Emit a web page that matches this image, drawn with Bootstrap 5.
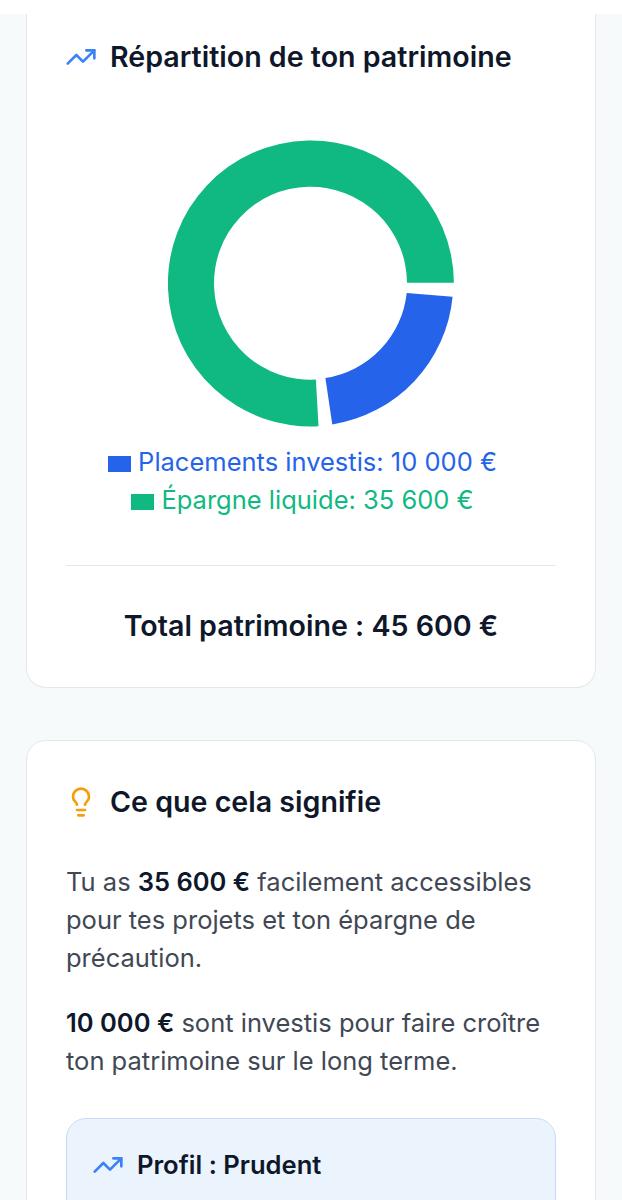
<!DOCTYPE html>
<html lang="fr">
<head>
  <meta charset="UTF-8" />
  <title>Patrimoine</title>
  <link href="https://cdn.jsdelivr.net/npm/bootstrap@5.3.0/dist/css/bootstrap.min.css" rel="stylesheet" />
  <style>
    html, body { height: 1200px; overflow: hidden; }
    body { background: #f6fafb; font-family: Inter, "Liberation Sans", sans-serif; color: #0f172a; font-feature-settings: "calt" 0; }
    .top-strip { height: 14px; background: #fff; }
    .page-wrap { padding: 0 26px; }
    .panel { background: #fff; border: 1px solid #e3e8ec; border-radius: 20px; padding: 0 39px; }
    .panel-first { border-top: 0; border-top-left-radius: 0; border-top-right-radius: 0; padding-top: 24px; padding-bottom: 41px; margin-bottom: 52px; }
    .panel-second { padding-top: 42px; padding-bottom: 40px; }
    .panel-title { font-size: 28.6px; font-weight: 600; line-height: 38px; margin: 0; }
    .title-icon { width: 32px; height: 32px; flex: none; margin-left: -1px; }
    .title-row { gap: 13px; }
    .donut { width: 286px; height: 287px; display: block; margin: 64px auto 16px; }
    .legend-line { font-size: 25.5px; line-height: 38px; text-align: center; padding-right: 17px; }
    .legend-blue { color: #2563eb; }
    .legend-green { color: #10b981; }
    .legend-dot { display: inline-block; width: 23px; height: 16px; margin-right: 7px; vertical-align: -1px; }
    .legend-blue .legend-dot { background: #2563eb; }
    .legend-green .legend-dot { background: #10b981; }
    .total-line { border-top: 1px solid #e2e8f0; margin-top: 46px; padding-top: 40px; font-size: 28.6px; font-weight: 600; line-height: 40px; text-align: center; }
    .copy { font-size: 25.5px; line-height: 38px; color: #3f4854; margin: 0 0 27px; }
    .copy strong { color: #0f172a; font-weight: 600; }
    .copy-first { margin-top: 42px; }
    .profile-box { background: #ebf3fd; border: 1px solid #c9dcf5; border-radius: 20px; padding: 27px 26px; margin-top: 38px; height: 200px; }
    .profile-title { font-size: 25.6px; font-weight: 600; line-height: 38px; margin: 0; }
  </style>
</head>
<body>
  <div class="top-strip"></div>
  <div class="page-wrap">

    <!-- Repartition -->
    <div class="panel panel-first">
      <div class="d-flex align-items-center title-row">
        <svg class="title-icon" viewBox="0 0 24 24" fill="none" stroke="#3b82f6" stroke-width="2" stroke-linecap="round" stroke-linejoin="round">
          <polyline points="22 7 13.5 15.5 8.5 10.5 2 17" />
          <polyline points="16 7 22 7 22 13" />
        </svg>
        <h2 class="panel-title">Répartition de ton patrimoine</h2>
      </div>

      <svg class="donut" viewBox="0 0 286 287">
        <path fill="#10b981" d="M285.9 142.7A143 143 0 1 0 150.5 286.3L147.9 239.6A96.5 96.5 0 1 1 239 142.7Z" />
        <path fill="#2563eb" d="M284.6 156.7A143 143 0 0 1 164.3 284.4L157.4 238.1A96.5 96.5 0 0 0 238.7 152.9Z" />
      </svg>

      <div class="legend-line legend-blue"><span class="legend-dot"></span>Placements investis: 10 000 €</div>
      <div class="legend-line legend-green"><span class="legend-dot"></span>Épargne liquide: 35 600 €</div>

      <div class="total-line">Total patrimoine : 45 600 €</div>
    </div>

    <!-- Signification -->
    <div class="panel panel-second">
      <div class="d-flex align-items-center title-row">
        <svg class="title-icon" viewBox="0 0 24 24" fill="none" stroke="#f59e0b" stroke-width="2" stroke-linecap="round" stroke-linejoin="round">
          <path d="M15 14c.2-1 .7-1.700 1.500-2.500 1-.9 1.500-2.200 1.500-3.500A6 6 0 0 0 6 8c0 1 .2 2.200 1.500 3.500.7.7 1.300 1.500 1.500 2.500" />
          <path d="M9 18h6" />
          <path d="M10 22h4" />
        </svg>
        <h2 class="panel-title">Ce que cela signifie</h2>
      </div>

      <p class="copy copy-first">Tu as <strong>35 600 €</strong> facilement accessibles pour tes projets et ton épargne de précaution.</p>
      <p class="copy"><strong>10 000 €</strong> sont investis pour faire croître ton patrimoine sur le long terme.</p>

      <div class="profile-box">
        <div class="d-flex align-items-center title-row">
          <svg class="title-icon" viewBox="0 0 24 24" fill="none" stroke="#3b82f6" stroke-width="2" stroke-linecap="round" stroke-linejoin="round">
            <polyline points="22 7 13.5 15.5 8.5 10.5 2 17" />
            <polyline points="16 7 22 7 22 13" />
          </svg>
          <h3 class="profile-title">Profil : Prudent</h3>
        </div>
      </div>
    </div>

  </div>
  <script src="https://cdn.jsdelivr.net/npm/bootstrap@5.3.0/dist/js/bootstrap.bundle.min.js"></script>
</body>
</html>
